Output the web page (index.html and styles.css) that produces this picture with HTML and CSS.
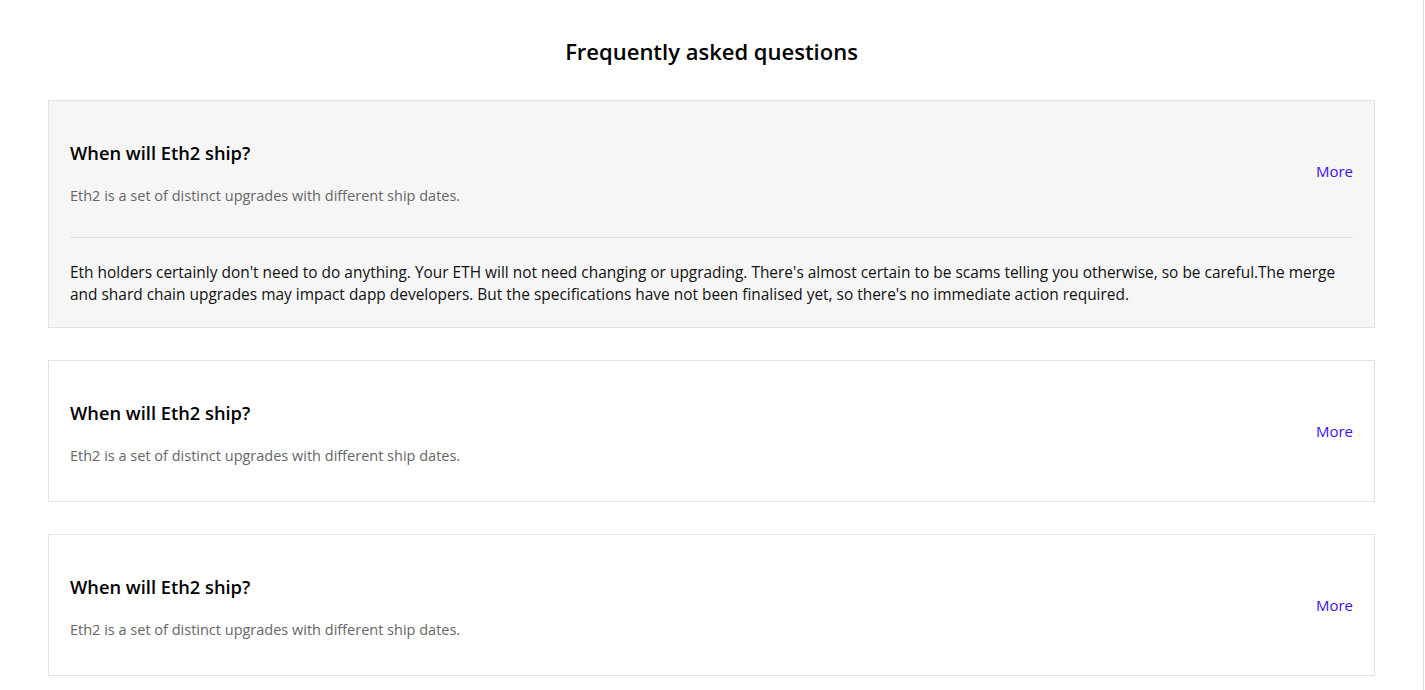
FILE: index.html
```html
<!DOCTYPE html>
<html lang="en">
<head>
<meta charset="utf-8">
<title>FAQ</title>
<link rel="stylesheet" href="styles.css">
</head>
<body>
<div class="page">
  <h1 class="title">Frequently asked questions</h1>
  <div class="list">
    <div class="card open">
      <div class="head">
        <div class="text">
          <h2 class="q">When will Eth2 ship?</h2>
          <p class="sub">Eth2 is a set of distinct upgrades with different ship dates.</p>
        </div>
        <a class="more" href="#">More</a>
      </div>
      <div class="answer">Eth holders certainly don't need to do anything. Your ETH will not need changing or upgrading. There's almost certain to be scams telling you otherwise, so be careful.The merge and shard chain upgrades may impact dapp developers. But the specifications have not been finalised yet, so there's no immediate action required.</div>
    </div>
    <div class="card">
      <div class="head">
        <div class="text">
          <h2 class="q">When will Eth2 ship?</h2>
          <p class="sub">Eth2 is a set of distinct upgrades with different ship dates.</p>
        </div>
        <a class="more" href="#">More</a>
      </div>
    </div>
    <div class="card">
      <div class="head">
        <div class="text">
          <h2 class="q">When will Eth2 ship?</h2>
          <p class="sub">Eth2 is a set of distinct upgrades with different ship dates.</p>
        </div>
        <a class="more" href="#">More</a>
      </div>
    </div>
  </div>
</div>
</body>
</html>
```

FILE: styles.css
```css
html, body {
  margin: 0;
  padding: 0;
  background: #fff;
}
body {
  font-family: "Open Sans", Lato, sans-serif;
  color: #000;
}
.page {
  width: 1424px;
  min-height: 690px;
  border-right: 1px solid #dcdcdc;
  padding: 0 48px;
  box-sizing: border-box;
}
.title {
  margin: 0 0 32px;
  padding-top: 35px;
  padding-bottom: 1px;
  text-align: center;
  font-size: 22px;
  line-height: 32px;
  font-weight: 600;
}
.list {
  display: flex;
  flex-direction: column;
  gap: 32px;
}
.card {
  border: 1px solid #e3e3e3;
  background: #fff;
  padding: 0 21px;
}
.card.open {
  background: #f6f6f6;
}
.head {
  display: flex;
  align-items: center;
  justify-content: space-between;
  padding: 40px 0 34px;
}
.open .head {
  border-bottom: 1px solid #e0e0e0;
  padding-bottom: 30px;
}
.q {
  margin: 0;
  font-size: 18.3px;
  line-height: 24px;
  font-weight: 600;
}
.sub {
  margin: 20px 0 0;
  font-size: 14.5px;
  line-height: 22px;
  color: #666;
}
.more {
  margin-bottom: 7px;
  font-size: 15px;
  line-height: 22px;
  color: #3d10f0;
  text-decoration: none;
}
.answer {
  padding: 23px 0 22px;
  font-size: 15.45px;
  line-height: 22px;
  color: #111;
}
```
